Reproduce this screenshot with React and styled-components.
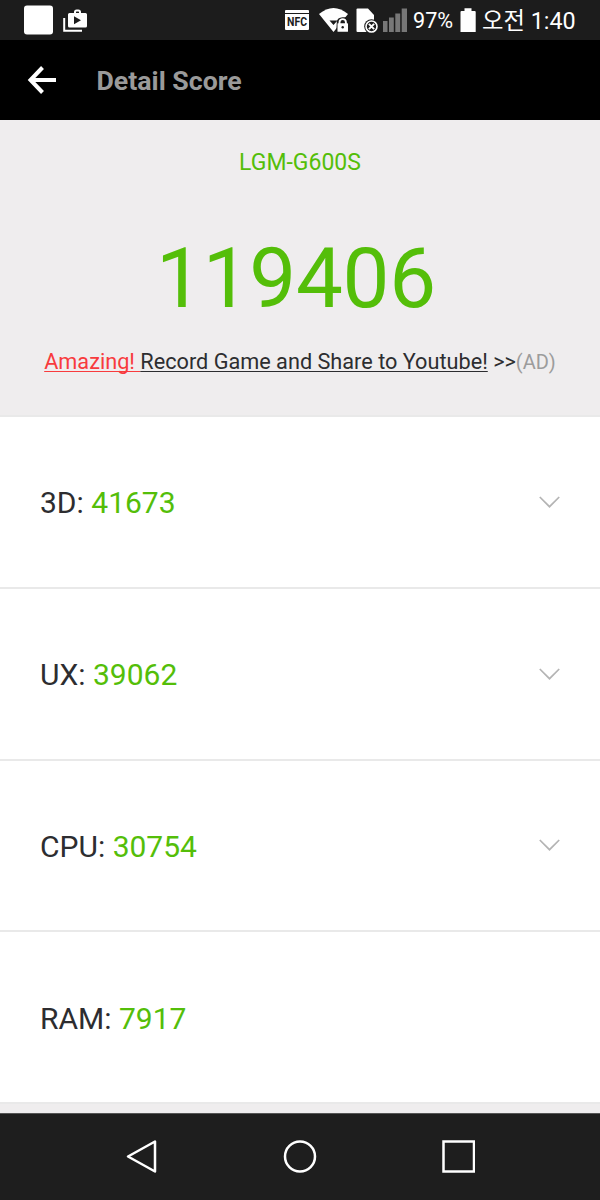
import React from 'react';
import styled, { createGlobalStyle } from 'styled-components';

const GlobalStyle = createGlobalStyle`
    * {
        box-sizing: border-box;
    }

    body {
        margin: 0;
        background: #efedee;
        font-family: Roboto, "Noto Sans CJK KR", sans-serif;
    }
`;

const Screen = styled.div`
    width: 600px;
    height: 1200px;
    display: flex;
    flex-direction: column;
    overflow: hidden;
    background: #efedee;
`;

const StatusBar = styled.div`
    height: 40px;
    flex: none;
    display: flex;
    align-items: center;
    padding: 0 25px 0 24px;
    background: #1c1c1c;
    color: #fff;
`;

const StatusIcon = styled.svg`
    display: block;
    flex: none;
    width: ${props => props.$width}px;
    height: 40px;
    margin-right: ${props => props.$gap || 0}px;
`;

const Spacer = styled.div`
    flex: 1;
`;

const Battery = styled.span`
    width: 47px;
    font-size: 21.6px;
    line-height: 40px;
    padding-top: 2px;
    white-space: nowrap;
`;

const Clock = styled.span`
    width: 94px;
    font-size: 23.3px;
    line-height: 40px;
    padding: 2px 0 0 1px;
    white-space: nowrap;
`;

const TitleBar = styled.header`
    height: 80px;
    flex: none;
    display: flex;
    align-items: center;
    padding-left: 26px;
    background: #000;
`;

const BackIcon = styled.svg`
    width: 32px;
    height: 32px;
    margin-right: 38.5px;
`;

const Title = styled.h1`
    margin: 0;
    padding-top: 2px;
    font-size: 26.7px;
    line-height: 32px;
    font-weight: 700;
    color: #9a9a9a;
`;

const Summary = styled.section`
    height: 297px;
    flex: none;
    display: flex;
    flex-direction: column;
    align-items: center;
    padding-top: 27px;
    border-bottom: 2px solid #e9e9e9;
`;

const Device = styled.div`
    font-size: 23px;
    line-height: 32px;
    color: #54be09;
`;

const Total = styled.div`
    margin-top: 50px;
    padding-right: 8px;
    font-size: 83.5px;
    line-height: 100px;
    letter-spacing: -0.3px;
    color: #54be09;
`;

const AdLine = styled.div`
    display: flex;
    margin-top: 17px;
    font-size: 21.7px;
    line-height: 32px;
    color: #2d2d30;
    white-space: pre;
`;

const AdText = styled.span`
    color: ${props => props.$color || 'inherit'};
    text-decoration: ${props => (props.$underline ? 'underline' : 'none')};
    text-decoration-thickness: 1px;
    text-underline-offset: 2px;
    text-decoration-skip-ink: none;
    font-size: ${props => props.$size || 21.7}px;
`;

const ScoreList = styled.ul`
    flex: none;
    margin: 0;
    padding: 0;
    list-style: none;
`;

const ScoreRow = styled.li`
    height: 171.75px;
    display: flex;
    align-items: center;
    justify-content: space-between;
    padding: 3.2px 40px 0;
    border-bottom: 2px solid #e9e9e9;
    background: #fff;
`;

const Label = styled.span`
    font-size: 30px;
    line-height: 36px;
    color: #2d2d30;
`;

const Value = styled.span`
    color: #54be09;
`;

const Chevron = styled.svg`
    width: 21px;
    height: 12px;
    margin-top: -3px;
`;

const NavBar = styled.nav`
    height: 87px;
    flex: none;
    display: flex;
    align-items: center;
    justify-content: center;
    gap: 124px;
    margin-top: auto;
    border-top: 1px solid #555;
    background: #1e1e1e;
`;

const NavIcon = styled.svg`
    width: 34px;
    height: 34px;
    fill: none;
    stroke: #fff;
    stroke-width: 2.5;
`;

const scores = [
    { name: '3D', value: 41673, details: true },
    { name: 'UX', value: 39062, details: true },
    { name: 'CPU', value: 30754, details: true },
    { name: 'RAM', value: 7917, details: false },
];

const Status = () => (
    <StatusBar>
        <StatusIcon $width={29} $gap={10} viewBox="0 0 29 40">
            <rect y="5.5" width="29" height="29" rx="3" fill="#fff" />
        </StatusIcon>
        <StatusIcon $width={24} viewBox="0 0 24 40">
            <path d="M1.200 18v12.800H19" fill="none" stroke="#fff" strokeWidth="2" />
            <path d="M12 14v-2q0-1.600 1.600-1.600h1.800q1.600 0 1.600 1.600V14" fill="none" stroke="#fff" strokeWidth="2" />
            <path fillRule="evenodd" d="M6.500 13h16q1.500 0 1.500 1.500V26q0 1.500-1.500 1.500h-16Q5 27.500 5 26V14.500Q5 13 6.500 13zM11 16.200v8l7-4z" fill="#fff" />
        </StatusIcon>
        <Spacer />
        <StatusIcon $width={24} $gap={10} viewBox="0 0 24 40">
            <path d="M1 10h22q1 0 1 1v2H0v-2q0-1 1-1zM0 14h24v15q0 1-1 1H1q-1 0-1-1z" fill="#fff" />
            <text x="12" y="26.300" textAnchor="middle" fontSize="12" fontWeight="700" textLength="20" lengthAdjust="spacingAndGlyphs" fill="#1c1c1c">NFC</text>
        </StatusIcon>
        <StatusIcon $width={29} $gap={8} viewBox="0 0 29 40">
            <path d="M0 14Q14.500 2 29 14L14.500 32z" fill="#fff" />
            <path d="M10.500 20.500h8L14.500 25zM17.800 22q.5-4.500 5.700-4.800h6v15.300H17.200z" fill="#1c1c1c" />
            <path d="M20.500 24v-1.700a3.200 3.200 0 0 1 6.400 0V24" fill="none" stroke="#fff" strokeWidth="1.900" />
            <rect x="18.500" y="23.200" width="10.500" height="8.600" rx=".6" fill="#fff" />
            <circle cx="23.700" cy="27.300" r="1.200" fill="#1c1c1c" />
        </StatusIcon>
        <StatusIcon $width={23} $gap={4} viewBox="0 0 23 40">
            <path d="M.5 9.500q0-1 1-1h10.500L18 15v17H1.500q-1 0-1-1z" fill="#fff" />
            <circle cx="15.500" cy="26.500" r="7.300" fill="#1c1c1c" />
            <circle cx="15.500" cy="26.500" r="5.500" fill="none" stroke="#fff" strokeWidth="1.600" />
            <path d="M12.900 23.900l5.200 5.200m0-5.200l-5.200 5.200" stroke="#fff" strokeWidth="2" />
        </StatusIcon>
        <StatusIcon $width={24} $gap={6} viewBox="0 0 24 40">
            <path d="M0 21h4.500v11H0zM6 17.500h4.800V32H6zM12.300 13.500h4.900V32h-4.900zM18.700 8.500H24V32h-5.300z" fill="#777" />
        </StatusIcon>
        <Battery>97%</Battery>
        <StatusIcon $width={16} $gap={5} viewBox="0 0 16 40">
            <path d="M4.500 8.300h7V11h3.200q1 0 1 1v20H.500V12q0-1 1-1h3z" fill="#fff" />
        </StatusIcon>
        <Clock>오전 1:40</Clock>
    </StatusBar>
);

const App = () => (
    <>
        <GlobalStyle />
        <Screen>
            <Status />
            <TitleBar>
                <BackIcon viewBox="0 0 32 32" fill="none" stroke="#fff" strokeWidth="4">
                    <path d="M4.500 16H30M16.500 3.500L4.500 16l12 12.500" />
                </BackIcon>
                <Title>Detail Score</Title>
            </TitleBar>
            <Summary>
                <Device>LGM-G600S</Device>
                <Total>119406</Total>
                <AdLine>
                    <AdText $color="#f83b3d" $underline>{'Amazing! '}</AdText>
                    <AdText $underline>Record Game and Share to Youtube!</AdText>
                    <AdText>{' >>'}</AdText>
                    <AdText $color="#9c9c9c" $size={20}>(AD)</AdText>
                </AdLine>
            </Summary>
            <ScoreList>
                {scores.map(({ name, value, details }) => (
                    <ScoreRow key={name}>
                        <Label>{name}: <Value>{value}</Value></Label>
                        {details && (
                            <Chevron viewBox="0 0 21 12" fill="none" stroke="#b4b4b4" strokeWidth="1.700">
                                <path d="M.8 1l9.700 9.700L20.200 1" />
                            </Chevron>
                        )}
                    </ScoreRow>
                ))}
            </ScoreList>
            <NavBar>
                <NavIcon viewBox="0 0 34 34">
                    <path d="M3 16.500L30 1.500v30z" strokeLinejoin="round" />
                </NavIcon>
                <NavIcon viewBox="0 0 34 34">
                    <circle cx="17" cy="16.500" r="15" />
                </NavIcon>
                <NavIcon viewBox="0 0 34 34">
                    <rect x="2.500" y="1.500" width="30.500" height="30" />
                </NavIcon>
            </NavBar>
        </Screen>
    </>
);

export default App;
